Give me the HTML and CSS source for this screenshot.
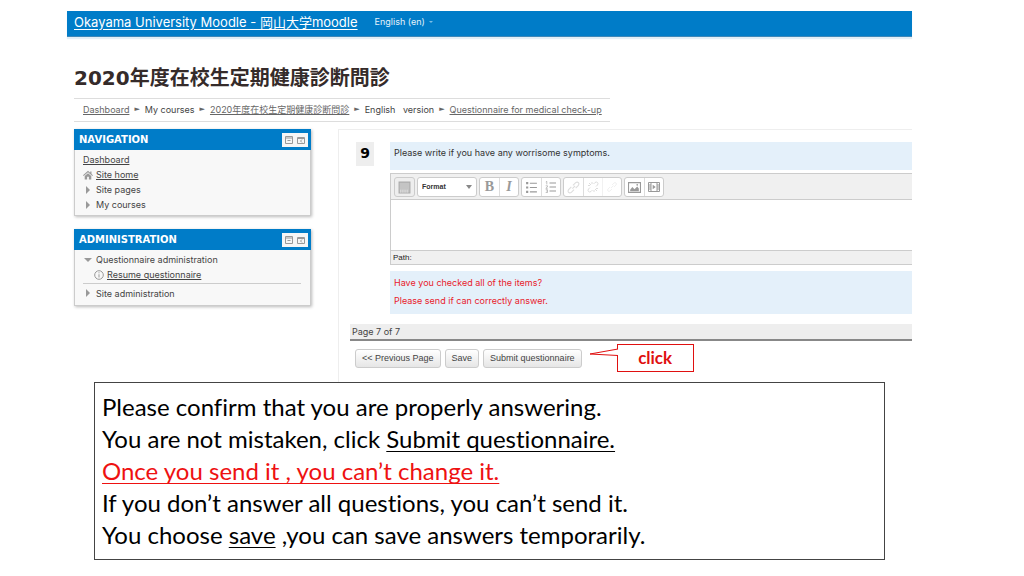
FILE: index.html
```html
<!DOCTYPE html>
<html lang="en">
<head>
<meta charset="UTF-8">
<meta name="viewport" content="width=device-width, initial-scale=1">
<title>Okayama University Moodle</title>
<link rel="stylesheet" href="styles.css">
</head>
<body>

<div class="moodle">
  <header class="topbar">
    <a class="brand" href="#">Okayama University Moodle - 岡山大学moodle</a>
    <button class="lang" type="button">English (en) <span class="caret"></span></button>
  </header>

  <h1>2020年度在校生定期健康診断問診</h1>

  <nav class="breadcrumb" aria-label="Breadcrumb">
    <a href="#">Dashboard</a>
    <span class="sep">►</span>
    <span>My courses</span>
    <span class="sep">►</span>
    <a href="#">2020年度在校生定期健康診断問診</a>
    <span class="sep">►</span>
    <span>English &nbsp; version</span>
    <span class="sep">►</span>
    <a href="#">Questionnaire for medical check-up</a>
  </nav>

  <div class="columns">
    <aside class="sidebar">
      <section class="block">
        <div class="block-head">
          <h2>NAVIGATION</h2>
          <div class="block-tools">
            <button type="button" aria-label="Hide Navigation block">
              <svg viewBox="0 0 10 10"><path d="M1.5 1.5h7v7h-7zM1.5 3h7M3.5 5.5h3"/></svg>
            </button>
            <button type="button" aria-label="Dock Navigation block">
              <svg viewBox="0 0 10 10"><path d="M1.5 2.5h7v6h-7zM1.5 3.5h7M6 4.5L4.5 6 6 7.5"/></svg>
            </button>
          </div>
        </div>
        <ul class="tree">
          <li><a href="#">Dashboard</a></li>
          <li>
            <svg class="icon" viewBox="0 0 10 10"><path class="solid" d="M5 .8L0 5.2l.7.7L5 2.2l4.3 3.7.7-.7-1.5-1.3V1.5H7.2v1.2zM5 3.2L1.7 6v3.4h2.4V6.8h1.8v2.6h2.4V6z"/></svg>
            <a href="#">Site home</a>
          </li>
          <li><svg class="icon" viewBox="0 0 10 10"><path class="solid" d="M3 1l4 4-4 4z"/></svg>Site pages</li>
          <li><svg class="icon" viewBox="0 0 10 10"><path class="solid" d="M3 1l4 4-4 4z"/></svg>My courses</li>
        </ul>
      </section>

      <section class="block">
        <div class="block-head">
          <h2>ADMINISTRATION</h2>
          <div class="block-tools">
            <button type="button" aria-label="Hide Administration block">
              <svg viewBox="0 0 10 10"><path d="M1.5 1.5h7v7h-7zM1.5 3h7M3.5 5.5h3"/></svg>
            </button>
            <button type="button" aria-label="Dock Administration block">
              <svg viewBox="0 0 10 10"><path d="M1.5 2.5h7v6h-7zM1.5 3.5h7M6 4.5L4.5 6 6 7.5"/></svg>
            </button>
          </div>
        </div>
        <ul class="tree">
          <li><svg class="icon" viewBox="0 0 10 10"><path class="solid" d="M1 3h8L5 7z"/></svg>Questionnaire administration</li>
          <li class="child">
            <svg class="icon" viewBox="0 0 10 10"><circle cx="5" cy="5" r="4.3"/><path d="M5 4.3v3.2M5 2.3v1"/></svg>
            <a href="#">Resume questionnaire</a>
          </li>
          <li class="split"><svg class="icon" viewBox="0 0 10 10"><path class="solid" d="M3 1l4 4-4 4z"/></svg>Site administration</li>
        </ul>
      </section>
    </aside>

    <main class="content">
      <form>
        <div class="question">
          <span class="qnum">9</span>
          <div class="qbody">
            <label class="qtext" for="answer">Please write if you have any worrisome symptoms.</label>
            <div class="editor">
              <div class="toolbar">
                <div class="group toggle">
                  <button type="button" aria-label="Toggle toolbar"><svg viewBox="0 0 12 12"><path class="pad" d="M1 1h10v10H1z"/><path class="keys" d="M2 8.5h8M2 10h8"/></svg></button>
                </div>
                <div class="group format">
                  <select aria-label="Format"><option>Format</option></select>
                  <span class="arrow"></span>
                </div>
                <div class="group">
                  <button class="bold" type="button">B</button>
                  <button class="italic" type="button">I</button>
                </div>
                <div class="group">
                  <button type="button" aria-label="Bulleted list"><svg viewBox="0 0 12 12"><path d="M4.5 2H11M4.5 6H11M4.5 10H11"/><path class="solid" d="M1 1h2v2H1zM1 5h2v2H1zM1 9h2v2H1z"/></svg></button>
                  <button type="button" aria-label="Numbered list"><svg viewBox="0 0 12 12"><path d="M4.5 2H11M4.5 6H11M4.5 10H11"/><path class="thin" d="M.8 1l1-.6V3.4M.7 4.8h1.8v1L.8 7.3h1.9M.7 8.7h1.8v2.8H.7M1.2 10h1.3"/></svg></button>
                </div>
                <div class="group faded">
                  <button type="button" aria-label="Link"><svg viewBox="0 0 12 12"><path d="M5 7l2.5-2.5M5.5 4L8 1.5q1.5-1 2.5 0t0 2.5L8 6.5M6.5 8L4 10.5q-1.5 1-2.5 0t0-2.5L4 5.5"/></svg></button>
                  <button type="button" aria-label="Unlink"><svg viewBox="0 0 12 12"><path d="M6.5 3L8 1.5q1.5-1 2.5 0t0 2.5L9 5.5M5.5 9L4 10.5q-1.5 1-2.5 0t0-2.5L3 6.5M2 2l2 2M8 8l2 2M5 1v2M1 4.5h2M7 9v2M9 7.5h2"/></svg></button>
                  <button class="fainter" type="button" aria-label="Prevent automatic linking"><svg viewBox="0 0 12 12"><path d="M5 7l2.5-2.5M6 4l2-2q1-1 2 0t0 2L8 6M6 8l-2 2q-1 1-2 0t0-2l2-2"/></svg></button>
                </div>
                <div class="group">
                  <button type="button" aria-label="Image"><svg viewBox="0 0 12 12"><path d="M.5 1.5h11v9H.5z"/><path class="solid" d="M2 9.5V8l2-2.5 2 2L8.5 5 10 7v2.5z"/><circle class="solid" cx="8.5" cy="3.5" r=".8"/></svg></button>
                  <button type="button" aria-label="Moodle media"><svg viewBox="0 0 12 12"><path d="M.5 1.5h11v9H.5zM3 1.5v9M9 1.5v9M.5 4H3M.5 6H3M.5 8H3M9 4h2.5M9 6h2.5M9 8h2.5"/><path class="solid" d="M4.7 3.8L7.7 6l-3 2.2z"/></svg></button>
                </div>
              </div>
              <textarea id="answer"></textarea>
              <div class="path">Path:</div>
            </div>
            <div class="notice">
              <p>Have you checked all of the items?</p>
              <p>Please send if can correctly answer.</p>
            </div>
          </div>
        </div>

        <div class="pager">Page 7 of 7</div>

        <div class="actions">
          <button type="button">&lt;&lt; Previous Page</button>
          <button type="button">Save</button>
          <button type="submit">Submit questionnaire</button>
          <div class="callout">
            <svg class="tail" viewBox="0 0 30 9"><path d="M29 1L1 6l28 1.5"/></svg>
            click
          </div>
        </div>
      </form>
    </main>
  </div>
</div>

<section class="explain">
  <p>Please confirm that you are properly answering.</p>
  <p>You are not mistaken, click <u>Submit questionnaire.</u></p>
  <p class="warn"><u>Once you send it , you can’t change it.</u></p>
  <p>If you don’t answer all questions, you can’t send it.</p>
  <p>You choose <u>save</u> ,you can save answers temporarily.</p>
</section>

</body>
</html>
```

FILE: styles.css
```css
* {
  box-sizing: border-box;
}
body {
  margin: 0;
  padding: 11px 0 16px;
  background: #fff;
  color: #444;
  font: 9px/15px Inter, "Noto Sans CJK JP", sans-serif;
}
h1, h2, p, ul {
  margin: 0;
  padding: 0;
}
h1, h2, .qnum {
  font-family: "DejaVu Sans", "Noto Sans CJK JP", sans-serif;
}
button, select, textarea {
  font: inherit;
  color: inherit;
  margin: 0;
}
a {
  color: inherit;
}
svg {
  display: block;
  fill: none;
  stroke: #999;
}
svg .solid {
  fill: #999;
  stroke: none;
}

.moodle {
  margin: 0 112px 0 67px;
}

/* top bar */
.topbar {
  display: flex;
  align-items: center;
  gap: 11px;
  height: 26px;
  padding: 0 7px 4px;
  background: #007cc8;
  border-bottom: 1px solid #3d87b8;
  box-shadow: 0 2px 1px #e3eef6;
  color: #fff;
}
.brand {
  font-size: 13px;
  line-height: 18px;
  text-underline-offset: 2px;
}
.lang {
  display: flex;
  align-items: center;
  gap: 4px;
  border: 0;
  background: none;
  color: #e3f1fa;
}
.caret {
  border: 2px solid transparent;
  border-top-color: #7dbde4;
  border-bottom: 0;
}

h1 {
  margin: 26px 0 5px 7px;
  color: #352b2a;
  font-size: 20px;
  line-height: 30px;
}

/* breadcrumb */
.breadcrumb {
  display: flex;
  align-items: center;
  gap: 5px;
  width: fit-content;
  height: 24px;
  margin-left: 7px;
  padding: 0 8px 1px 9px;
  border: 1px solid #ddd;
  border-width: 1px 0;
  white-space: nowrap;
}
.breadcrumb a {
  color: #666;
}
.sep {
  color: #666;
  font: 7px/15px "DejaVu Sans", sans-serif;
}

.columns {
  display: flex;
  gap: 27px;
  margin: 7px 0 0 7px;
}

/* side blocks */
.sidebar {
  flex: 0 0 237px;
}
.block {
  margin-bottom: 13px;
  border: 1px solid #ccc;
  border-top: 0;
  background: #f8f8f8;
  box-shadow: 1px 1px 3px #bbb;
}
.block-head {
  display: flex;
  align-items: center;
  justify-content: space-between;
  height: 21px;
  margin: 0 -1px;
  padding: 0 3px 0 5px;
  background: #007cc8;
}
.block-head h2 {
  color: #fff;
  font-size: 10px;
  line-height: 15px;
}
.block-tools {
  display: flex;
  gap: 2px;
  padding: 2px;
  background: #f6f6f6;
}
.block-tools button {
  width: 10px;
  height: 10px;
  padding: 0;
  border: 0;
  background: none;
}
.tree {
  list-style: none;
  padding: 2px 9px 3px 8px;
}
.tree li {
  display: flex;
  align-items: center;
  gap: 3px;
  height: 15px;
}
.tree .child {
  padding-left: 11px;
}
.tree .split {
  height: 19px;
  margin-top: 1px;
  border-top: 1px solid #ccc;
}
.icon {
  width: 10px;
  height: 10px;
}

/* questionnaire */
.content {
  flex: 1;
  min-width: 0;
  padding: 12px 0 10px 11px;
  border: 1px solid #eee;
  border-width: 1px 0 0 1px;
}
.question {
  display: flex;
  align-items: flex-start;
  gap: 16px;
  padding-left: 6px;
}
.qnum {
  width: 18px;
  height: 24px;
  background: #eee;
  color: #000;
  font-size: 14px;
  font-weight: bold;
  line-height: 22px;
  text-align: center;
}
.qbody {
  flex: 1;
  min-width: 0;
}
.qtext {
  display: block;
  height: 28px;
  padding: 3px 4px;
  background: #e4f0fa;
  color: #333;
}
.editor {
  margin: 3px 0 6px;
  border: 1px solid #ccc;
  border-right: 0;
}
.toolbar {
  display: flex;
  gap: 2px;
  height: 26px;
  padding: 3px;
  border-bottom: 1px solid #ccc;
  background: #f0f0f0;
}
.group {
  display: flex;
  height: 20px;
  border: 1px solid #ccc;
  border-radius: 3px;
  background: #fff;
}
.group button {
  width: 19px;
  padding: 0 3px;
  border: 0;
  background: none;
}
.group button + button {
  border-left: 1px solid #ddd;
}
.toggle {
  background: #eee;
}
.pad {
  fill: #c4c4c4;
  stroke: #aaa;
}
.keys {
  stroke: #e4e4e4;
  stroke-dasharray: 1 1;
}
.thin {
  stroke-width: 0.6;
}
.group .bold, .group .italic {
  color: #999;
  font: bold 14px/18px "Liberation Serif", serif;
}
.group .italic {
  font-style: italic;
}
.faded svg {
  stroke: #ddd;
}
.fainter {
  opacity: 0.4;
}
.format {
  align-items: center;
  width: 60px;
  padding-right: 4px;
}
.format select {
  flex: 1;
  min-width: 0;
  padding: 0 4px;
  border: 0;
  background: none;
  appearance: none;
  color: #333;
  font: bold 7px/18px "Liberation Sans", sans-serif;
}
.arrow {
  border: 3px solid transparent;
  border-top: 4px solid #888;
  border-bottom: 0;
}
textarea {
  display: block;
  width: 100%;
  height: 50px;
  border: 0;
  resize: none;
  background: #fff;
}
.path {
  padding: 0 2px;
  border-top: 1px solid #ccc;
  background: #f0f0f0;
  color: #222;
  font: 8px/13px "Liberation Sans", sans-serif;
}
.notice {
  padding: 3px 4px 4px;
  background: #e4f0fa;
  color: #e8202c;
  line-height: 18px;
}

.pager {
  margin-top: 10px;
  padding: 0 2px;
  border-bottom: 2px solid #888;
  background: #eee;
}

/* submit row */
.actions {
  display: flex;
  align-items: flex-end;
  gap: 4px;
  margin-top: 3px;
  padding: 0 5px 4px;
}
.actions button {
  height: 19px;
  padding: 0 6px;
  border: 1px solid #ccc;
  border-radius: 3px;
  background: linear-gradient(#fff, #e6e6e6);
  font-family: "Liberation Sans", sans-serif;
  line-height: 17px;
}
.callout {
  position: relative;
  width: 77px;
  margin: 0 0 -4px 31px;
  border: 1px solid #e01010;
  background: #fff;
  color: #e01010;
  font: bold 17px/26px Lato, sans-serif;
  text-align: center;
}
.tail {
  position: absolute;
  top: 3px;
  right: 74px;
  width: 30px;
  height: 9px;
}
.tail path {
  fill: #fff;
  stroke: #e01010;
}

/* explanation under the page */
.explain {
  margin: 0 139px 0 94px;
  padding: 8px 7px;
  border: 1px solid #444;
  background: #fff;
  color: #000;
  font: 24px/32px Lato, sans-serif;
  font-variant-ligatures: none;
}
.explain u {
  text-decoration-thickness: 1px;
  text-underline-offset: 3px;
  text-decoration-skip-ink: none;
}
.explain .warn {
  color: #ee1111;
}
```
